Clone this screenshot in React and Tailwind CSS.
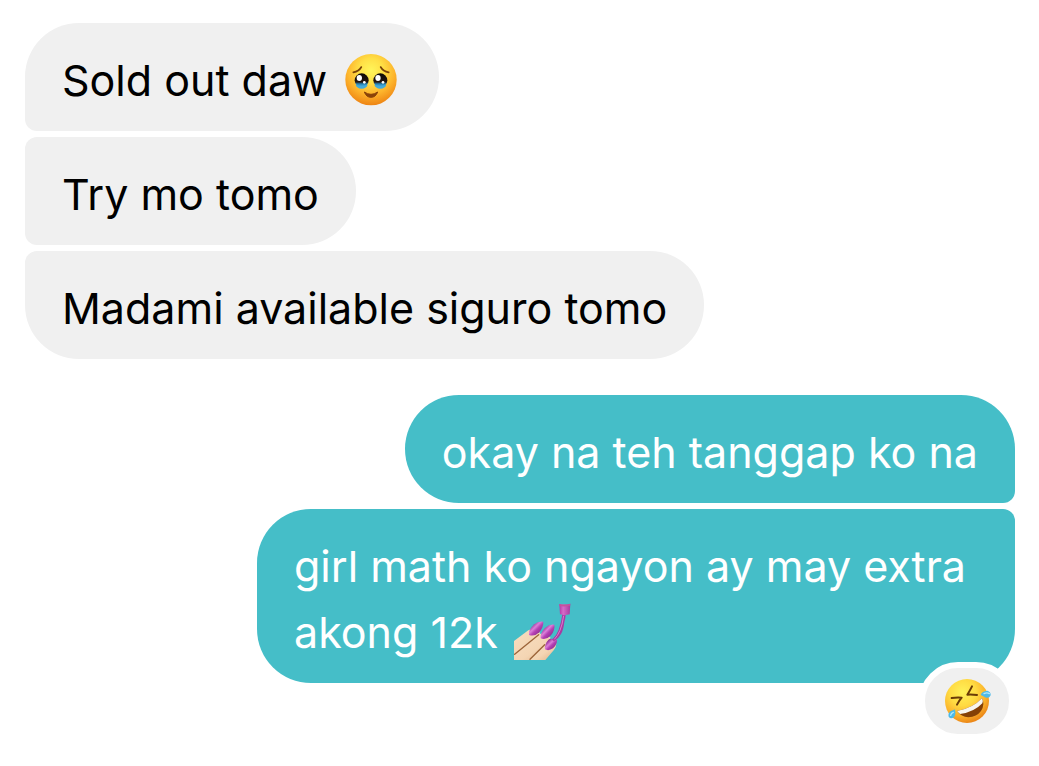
import clsx from "clsx";

const TearyFace = () => (
  <svg
    role="img"
    aria-label="face holding back tears"
    viewBox="27 30 189 168"
    className="inline-block h-14 w-[63px] overflow-visible align-text-bottom"
  >
    <defs>
      <radialGradient id="tearySkin" cx="0.5" cy="0.32" r="0.68">
        <stop offset="0" stopColor="#fff55a" />
        <stop offset="0.35" stopColor="#ffdf45" />
        <stop offset="0.68" stopColor="#fdb42c" />
        <stop offset="1" stopColor="#ee8413" />
      </radialGradient>
      <linearGradient id="tearyEye" x1="0" y1="0" x2="0" y2="1">
        <stop offset="0" stopColor="#0d0907" />
        <stop offset="0.62" stopColor="#24160f" />
        <stop offset="0.76" stopColor="#2784b8" />
        <stop offset="1" stopColor="#4cb4e4" />
      </linearGradient>
    </defs>
    <circle cx="123" cy="119" r="77" fill="url(#tearySkin)" />
    {/* brows */}
    <g fill="none" stroke="#7a4308" strokeWidth="5" strokeLinecap="round">
      <path d="M70 97 Q87 94 94 81" />
      <path d="M176 97 Q159 94 152 81" />
    </g>
    {/* eyes with the tear pooling below */}
    <circle cx="95" cy="121" r="21" fill="url(#tearyEye)" />
    <circle cx="151" cy="121" r="21" fill="url(#tearyEye)" />
    <path d="M77 134 Q95 140 113 134 Q110 145 95 146 Q80 145 77 134Z" fill="#45abd9" />
    <path d="M133 134 Q151 140 169 134 Q166 145 151 146 Q136 145 133 134Z" fill="#45abd9" />
    <g fill="#fff">
      <ellipse cx="88" cy="114" rx="8" ry="9" />
      <ellipse cx="144" cy="114" rx="8" ry="9" />
      <circle cx="103" cy="127" r="4" />
      <circle cx="159" cy="127" r="4" />
    </g>
    <path
      d="M103 156 Q123 170 143 156 Q137 172 123 172 Q109 172 103 156Z"
      fill="#8a4309"
      stroke="#8a4309"
      strokeWidth="3"
      strokeLinejoin="round"
    />
  </svg>
);

const NailPolish = () => (
  <svg
    role="img"
    aria-label="nail polish"
    viewBox="33 36 189 168"
    className="inline-block h-14 w-[63px] overflow-visible align-text-bottom"
  >
    <defs>
      <linearGradient id="nailSkin" x1="0" y1="0" x2="1" y2="1">
        <stop offset="0" stopColor="#f8dfc2" />
        <stop offset="0.6" stopColor="#f4d5b3" />
        <stop offset="1" stopColor="#dfae84" />
      </linearGradient>
      <linearGradient id="nailPaint" x1="0" y1="0" x2="1" y2="1">
        <stop offset="0.2" stopColor="#8e2891" />
        <stop offset="0.42" stopColor="#dc80d9" />
        <stop offset="0.56" stopColor="#b541b4" />
        <stop offset="1" stopColor="#6f1874" />
      </linearGradient>
      <linearGradient id="brushCap" x1="0" y1="0" x2="1" y2="0">
        <stop offset="0" stopColor="#b13aa8" />
        <stop offset="0.35" stopColor="#d56bc8" />
        <stop offset="1" stopColor="#a83a9f" />
      </linearGradient>
    </defs>
    {/* fingers */}
    <path d="M45 153 L88 121 Q108 112 121 124 L123 132 L88 164 L45 195Z" fill="url(#nailSkin)" />
    <path d="M45 194 L112 138 Q124 125 143 134 L155 143 L139 165 L93 210 L45 210Z" fill="url(#nailSkin)" />
    <path d="M92 210 L137 163 Q148 145 165 151 Q180 161 164 181 L139 210Z" fill="url(#nailSkin)" />
    <g fill="none" stroke="#9c6439" strokeWidth="4" strokeLinecap="round">
      <path d="M47 193 L119 134" />
      <path d="M93 208 L137 164" />
    </g>
    {/* nails */}
    <path d="M90 135 Q88 119 106 103 Q119 92 133 95 Q134 110 121 127 Q107 141 90 135Z" fill="url(#nailPaint)" />
    <path d="M125 145 Q123 130 138 114 Q151 102 166 104 Q169 118 156 136 Q142 151 125 145Z" fill="url(#nailPaint)" />
    <path d="M138 178 Q136 162 150 148 Q160 144 174 150 Q175 164 162 175 Q149 184 138 178Z" fill="url(#nailPaint)" />
    {/* brush */}
    <path
      d="M190 73 L200 73 Q200 84 196 96 Q193 121 186 132 Q179 145 165 154 L159 149 Q173 136 179 119 Q187 98 190 73Z"
      fill="#a93aa2"
    />
    <path d="M194 77 Q190 105 183 121 Q176 138 166 148" fill="none" stroke="#dd78cf" strokeWidth="3" />
    <path d="M181 42 Q197 46 214 41 L212 73 Q197 78 183 73Z" fill="url(#brushCap)" />
    <path d="M181 42 Q197 46 214 41 L213 47 Q197 51 181 48Z" fill="#c6519c" />
  </svg>
);

const Rofl = () => (
  <svg role="img" aria-label="rolling on the floor laughing" viewBox="129 111 144 144" className="size-12 overflow-visible">
    <defs>
      <radialGradient id="roflSkin" cx="0.4" cy="0.3" r="0.72">
        <stop offset="0" stopColor="#fff158" />
        <stop offset="0.42" stopColor="#ffda42" />
        <stop offset="0.75" stopColor="#fbb02a" />
        <stop offset="1" stopColor="#ea8315" />
      </radialGradient>
    </defs>
    <circle cx="201" cy="183" r="66" fill="url(#roflSkin)" />
    <g fill="none" stroke="#6b3b07" strokeWidth="6" strokeLinecap="round" strokeLinejoin="round">
      <path d="M155 174 Q169 172 185 173 Q177 182 171 194" />
      <path d="M216 139 Q209 153 202 164 Q215 163 231 165" />
    </g>
    {/* open mouth */}
    <path d="M171 213 Q218 205 246 175 Q256 193 243 213 Q230 231 205 232 Q184 231 171 213Z" fill="#854006" />
    <path d="M171 213 Q218 205 246 175 Q250 182 247 190 Q222 217 180 222 Q175 218 171 213Z" fill="#f7f5ef" />
    {/* tears */}
    <path d="M242 165 Q246 153 262 152 Q273 155 272 166 Q267 177 255 172 Q249 168 242 165Z" fill="#4dbae8" />
    <path d="M164 208 Q169 220 163 230 Q153 239 146 230 Q143 219 153 213 Q159 211 164 208Z" fill="#4dbae8" />
    <path d="M252 161 Q261 156 268 161" fill="none" stroke="#b2e8fb" strokeWidth="4" strokeLinecap="round" />
    <path d="M152 226 Q153 219 160 217" fill="none" stroke="#b2e8fb" strokeWidth="4" strokeLinecap="round" />
  </svg>
);

const received = [
  { id: 1, text: "Sold out daw", emoji: <TearyFace /> },
  { id: 2, text: "Try mo tomo" },
  { id: 3, text: "Madami available siguro tomo" },
];

const sent = [
  { id: 4, text: "okay na teh tanggap ko na" },
  { id: 5, text: "girl math ko ngayon ay may extra akong 12k", emoji: <NailPolish />, reaction: <Rofl /> },
];

function Bubble({ message, mine, first, last }) {
  return (
    <li
      className={clsx(
        "relative max-w-[758px] rounded-[54px] px-[37px] pt-6 pb-[18px]",
        mine ? "bg-[#45bec8] text-white" : "bg-[#f0f0f0] text-black",
        mine && !first && "rounded-tr-xl",
        mine && !last && "rounded-br-xl",
        !mine && !first && "rounded-tl-xl",
        !mine && !last && "rounded-bl-xl"
      )}
    >
      <p>
        {message.text}
        {message.emoji && <> {message.emoji}</>}
      </p>
      {message.reaction && (
        <button
          type="button"
          className="absolute right-0 -bottom-[57px] flex h-[78px] w-24 items-center justify-center rounded-full border-6 border-white bg-[#f0f0f0]"
        >
          {message.reaction}
        </button>
      )}
    </li>
  );
}

function MessageGroup({ messages, mine }) {
  return (
    <ul className={clsx("flex flex-col gap-1.5", mine ? "items-end" : "items-start")}>
      {messages.map((message, i) => (
        <Bubble
          key={message.id}
          message={message}
          mine={mine}
          first={i === 0}
          last={i === messages.length - 1}
        />
      ))}
    </ul>
  );
}

function App() {
  return (
    <main className="flex min-h-screen flex-col gap-9 bg-white pt-[23px] pr-6 pb-20 pl-[25px] font-['Inter',sans-serif] text-[43px] leading-[66px]">
      <MessageGroup messages={received} />
      <MessageGroup messages={sent} mine />
    </main>
  );
}

export default App;
